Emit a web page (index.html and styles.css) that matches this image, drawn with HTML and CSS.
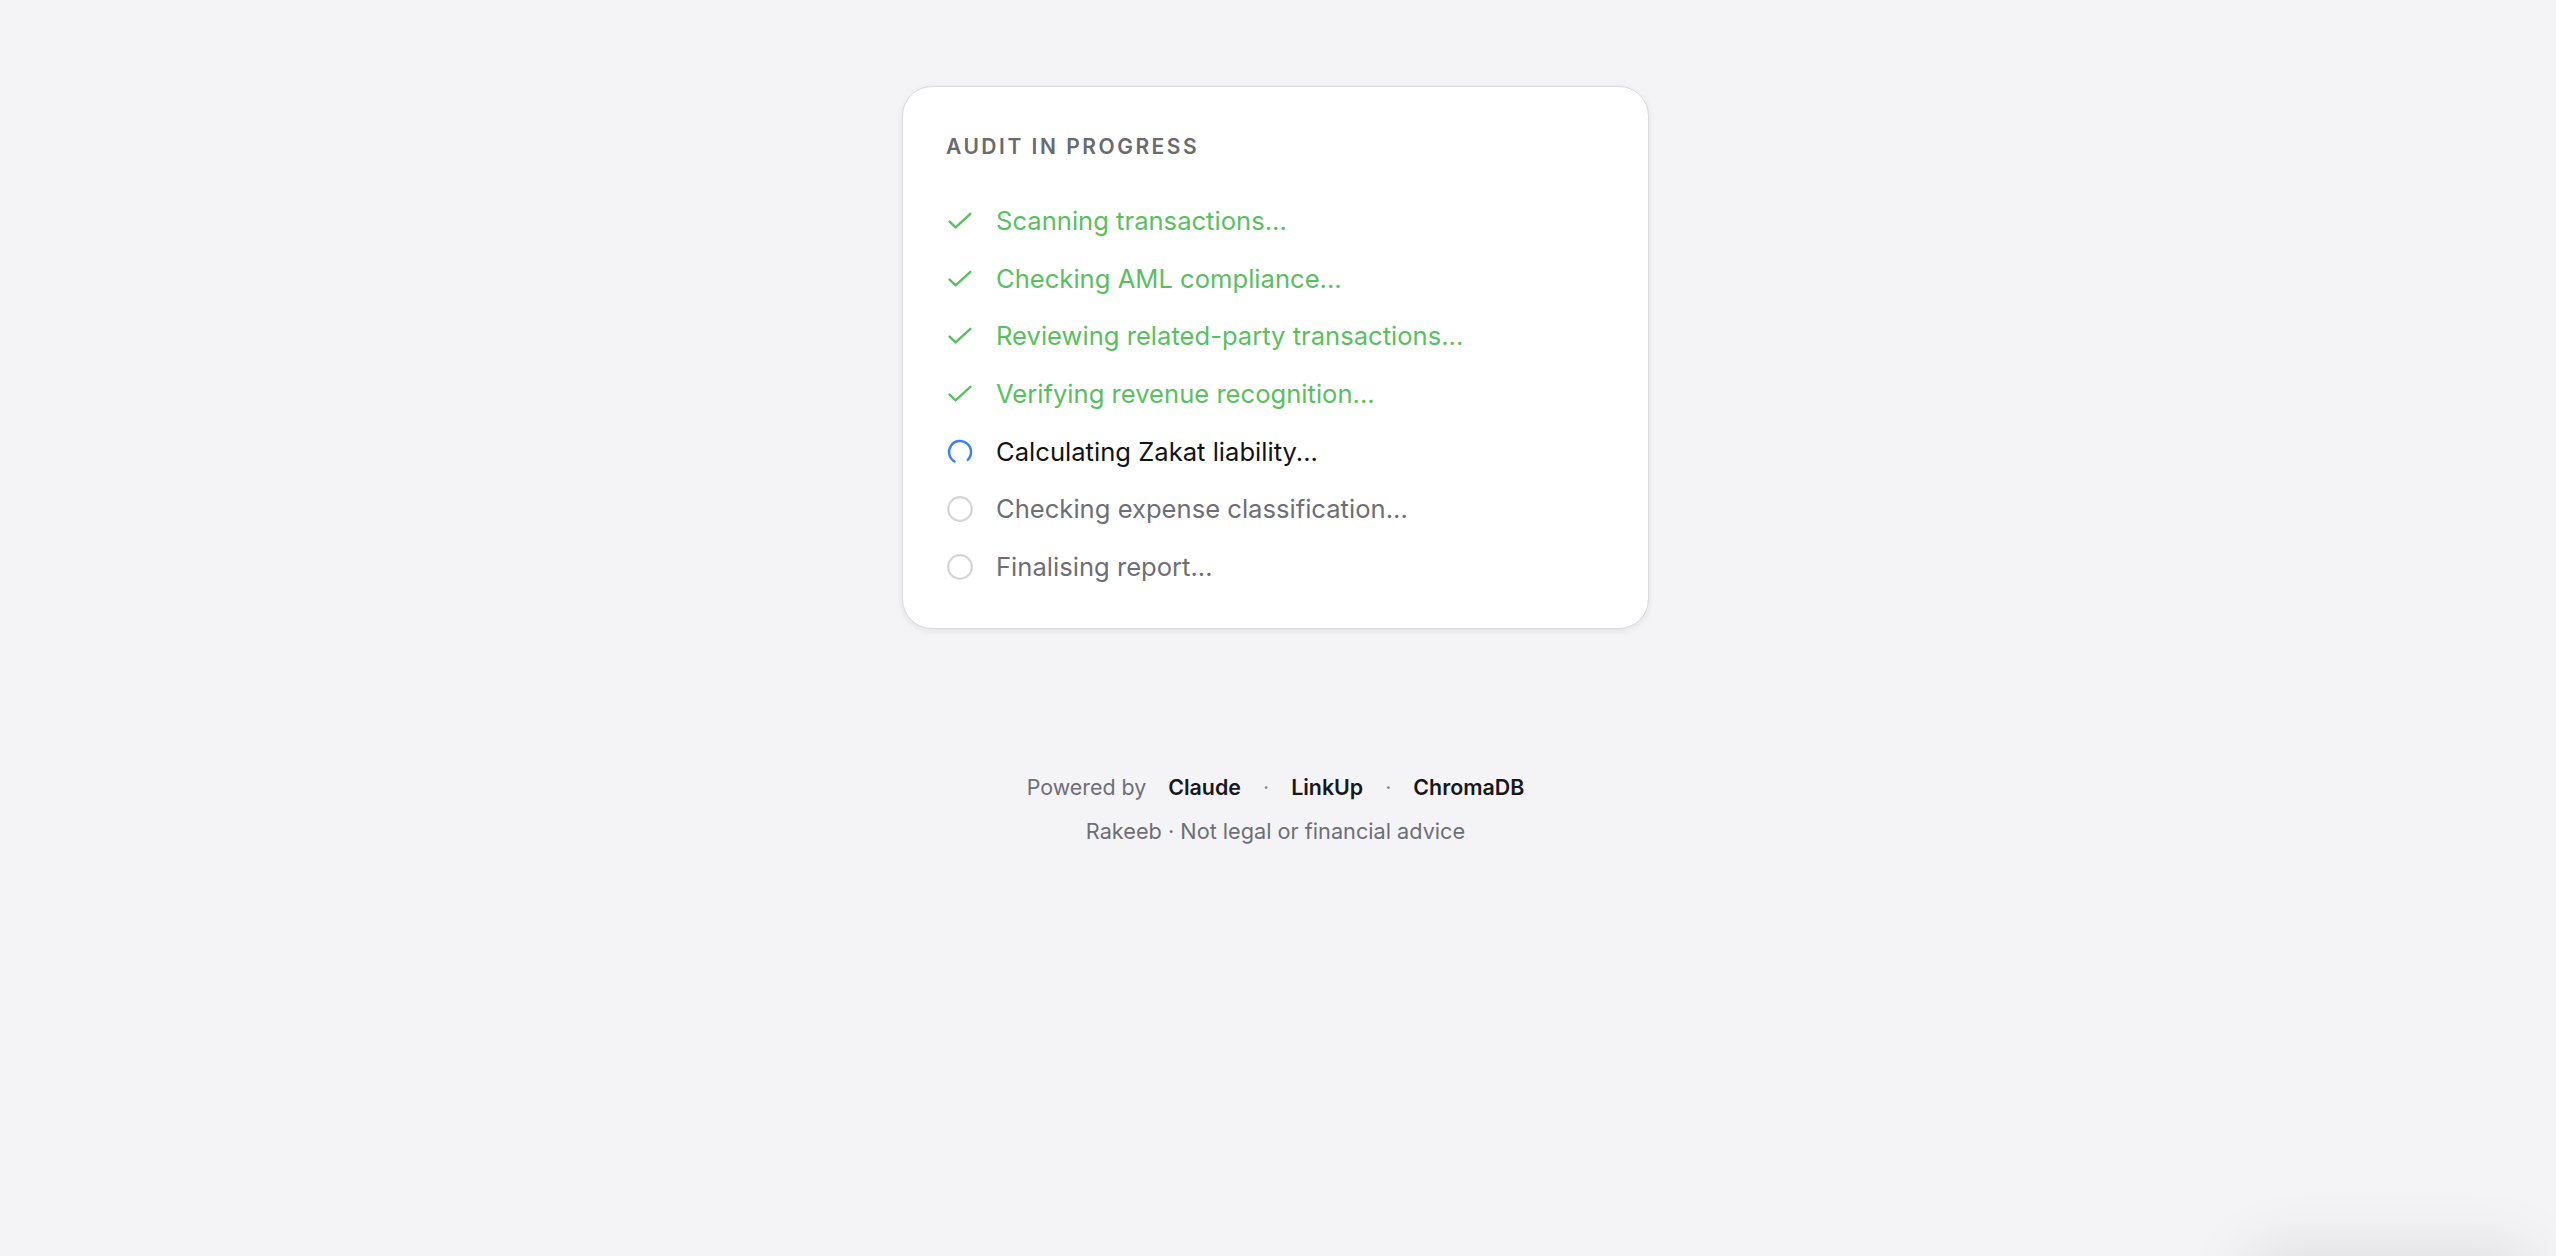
FILE: index.html
```html
<!DOCTYPE html>
<html lang="en">
<head>
<meta charset="utf-8">
<title>Audit in progress</title>
<link rel="stylesheet" href="styles.css">
</head>
<body>
<main class="page">
  <section class="card">
    <h2 class="card-title">AUDIT IN PROGRESS</h2>
    <ul class="steps">
      <li class="step done">
        <span class="icon"><svg viewBox="0 0 28 28" width="28" height="28"><path d="M3.6 14.6 9.6 20.4 24.4 6.8" fill="none" stroke="currentColor" stroke-width="2.4" stroke-linecap="round" stroke-linejoin="round"/></svg></span>
        <span class="label">Scanning transactions...</span>
      </li>
      <li class="step done">
        <span class="icon"><svg viewBox="0 0 28 28" width="28" height="28"><path d="M3.6 14.6 9.6 20.4 24.4 6.8" fill="none" stroke="currentColor" stroke-width="2.4" stroke-linecap="round" stroke-linejoin="round"/></svg></span>
        <span class="label">Checking AML compliance...</span>
      </li>
      <li class="step done">
        <span class="icon"><svg viewBox="0 0 28 28" width="28" height="28"><path d="M3.6 14.6 9.6 20.4 24.4 6.8" fill="none" stroke="currentColor" stroke-width="2.4" stroke-linecap="round" stroke-linejoin="round"/></svg></span>
        <span class="label">Reviewing related-party transactions...</span>
      </li>
      <li class="step done">
        <span class="icon"><svg viewBox="0 0 28 28" width="28" height="28"><path d="M3.6 14.6 9.6 20.4 24.4 6.8" fill="none" stroke="currentColor" stroke-width="2.4" stroke-linecap="round" stroke-linejoin="round"/></svg></span>
        <span class="label">Verifying revenue recognition...</span>
      </li>
      <li class="step active">
        <span class="icon"><svg viewBox="0 0 28 28" width="28" height="28"><path d="M8.5 23.5A11 11 0 1 1 21.8 21.8" fill="none" stroke="currentColor" stroke-width="2.5" stroke-linecap="round"/></svg></span>
        <span class="label">Calculating Zakat liability...</span>
      </li>
      <li class="step pending">
        <span class="icon"><svg viewBox="0 0 28 28" width="28" height="28"><circle cx="14" cy="14" r="11.8" fill="none" stroke="currentColor" stroke-width="2.2"/></svg></span>
        <span class="label">Checking expense classification...</span>
      </li>
      <li class="step pending">
        <span class="icon"><svg viewBox="0 0 28 28" width="28" height="28"><circle cx="14" cy="14" r="11.8" fill="none" stroke="currentColor" stroke-width="2.2"/></svg></span>
        <span class="label">Finalising report...</span>
      </li>
    </ul>
  </section>

  <footer class="footer">
    <p class="powered">
      <span class="muted">Powered by</span>
      <strong>Claude</strong>
      <span class="dot">·</span>
      <strong>LinkUp</strong>
      <span class="dot">·</span>
      <strong>ChromaDB</strong>
    </p>
    <p class="disclaimer">Rakeeb · Not legal or financial advice</p>
  </footer>
</main>
<div class="floating-shadow"></div>
</body>
</html>
```

FILE: styles.css
```css
* { box-sizing: border-box; }

html, body {
  margin: 0;
  padding: 0;
  background: #f4f4f6;
  font-family: Inter, "Noto Sans", "Liberation Sans", sans-serif;
  color: #18181b;
  overflow: hidden;
}

.page {
  display: flex;
  flex-direction: column;
  align-items: center;
  padding: 86px 5px 0 0;
  min-height: 100vh;
}

.card {
  width: 747px;
  background: #ffffff;
  border: 1px solid #dadade;
  border-radius: 30px;
  box-shadow: 0 2px 6px rgba(0, 0, 0, 0.08);
  padding: 45.5px 43px 43px 43px;
}

.card-title {
  margin: 0;
  font-size: 21px;
  line-height: 28px;
  font-weight: 600;
  letter-spacing: 0.12em;
  color: #6a6a70;
}

.steps {
  list-style: none;
  margin: 42.5px 0 0 0;
  padding: 0;
  display: flex;
  flex-direction: column;
  gap: 21.7px;
}

.step {
  display: flex;
  align-items: center;
  gap: 22px;
  font-size: 25.6px;
  line-height: 36px;
}

.icon {
  width: 28px;
  height: 28px;
  flex: none;
  display: flex;
}

.step.done { color: #59c05f; }
.step.done .icon { color: #59c05f; }
.step.active { color: #131316; }
.step.active .icon { color: #3b82f6; }
.step.pending { color: #6e6e76; }
.step.pending .icon { color: #d4d4d8; }

.footer {
  margin-top: 143px;
  display: flex;
  flex-direction: column;
  align-items: center;
  gap: 14px;
}

.footer p { margin: 0; }

.powered {
  display: flex;
  align-items: center;
  gap: 22px;
  font-size: 21.4px;
  line-height: 30px;
  color: #6e6e76;
}

.powered strong {
  font-weight: 600;
  color: #18181b;
}

.dot { color: #8a8a92; }

.disclaimer {
  font-size: 21.7px;
  line-height: 30px;
  color: #6e6e76;
}

.floating-shadow {
  position: fixed;
  left: 2250px;
  top: calc(100vh + 6px);
  width: 280px;
  height: 60px;
  border-radius: 16px;
  background: #ffffff;
  box-shadow: 0 -6px 70px rgba(0, 0, 0, 0.12);
}
```
